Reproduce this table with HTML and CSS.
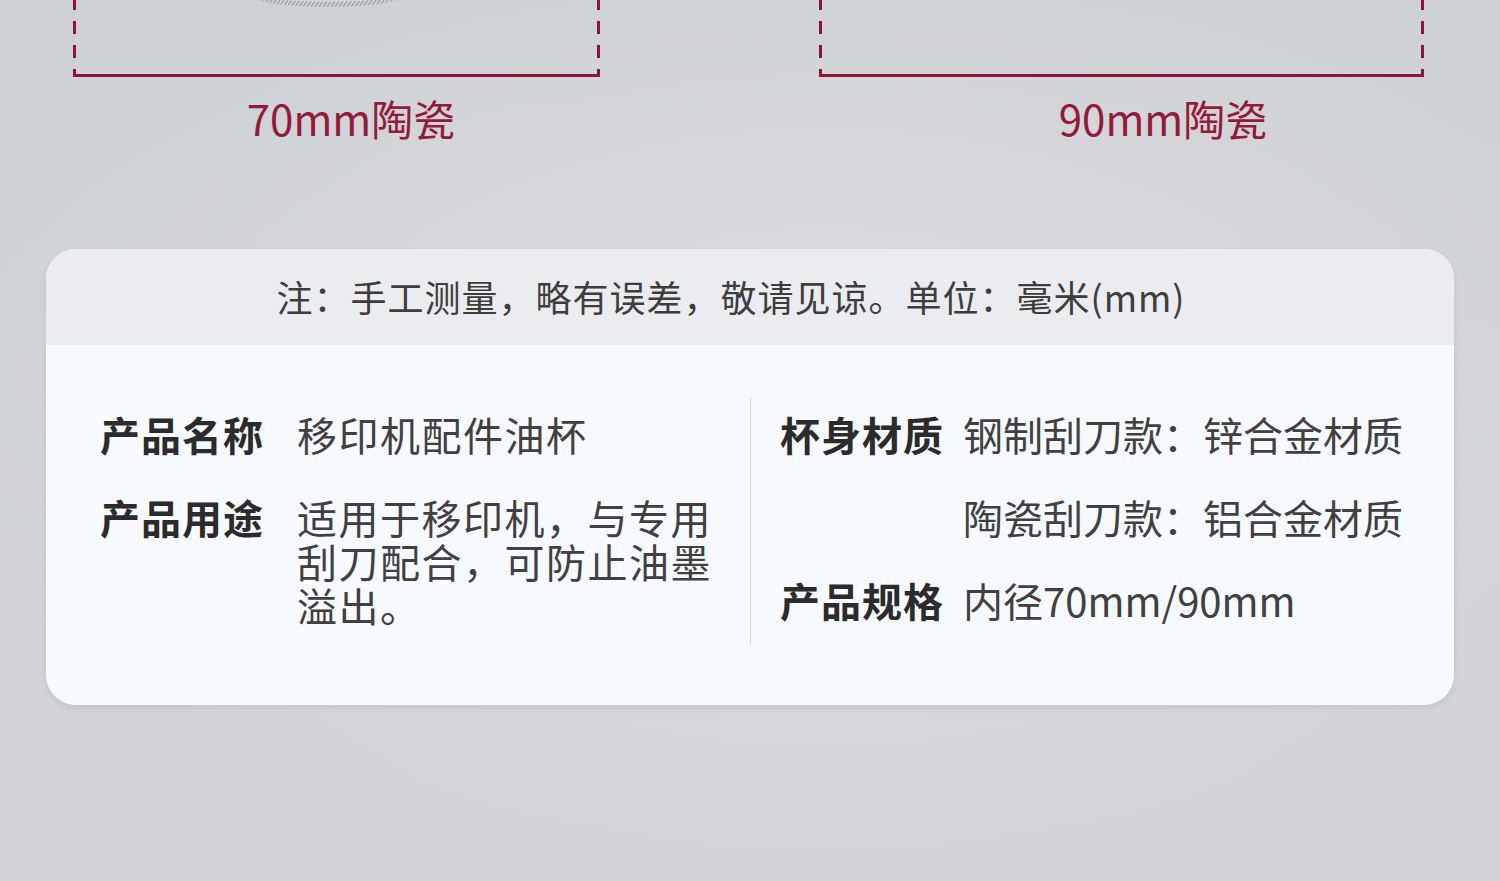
FILE: index.html
```html
<!DOCTYPE html>
<html lang="zh-CN">
<head>
    <meta charset="UTF-8">
    <meta name="viewport" content="width=device-width, initial-scale=1.0">
    <title>移印机配件油杯 - 规格参数</title>
    <link rel="stylesheet" href="styles.css">
</head>
<body>
    <!-- Size frames -->
    <div class="sizes">
        <div class="size-col size-70">
            <div class="frame">
                <svg class="ring" width="170" height="12" viewBox="0 0 170 12">
                    <defs>
                        <pattern id="knurl" width="4" height="12" patternUnits="userSpaceOnUse" patternTransform="skewX(-35)">
                            <rect width="4" height="12" fill="#d4d5d7"/>
                            <rect width="2" height="12" fill="#a6a7aa"/>
                        </pattern>
                    </defs>
                    <ellipse cx="85" cy="-5" rx="76" ry="12" fill="url(#knurl)"/>
                    <ellipse cx="85" cy="-8" rx="72" ry="10" fill="#cfd1d5"/>
                </svg>
            </div>
            <p class="size-label">70mm陶瓷</p>
        </div>
        <div class="size-col size-90">
            <div class="frame"></div>
            <p class="size-label">90mm陶瓷</p>
        </div>
    </div>

    <!-- Spec card -->
    <div class="spec-card">
        <div class="spec-note">注：手工测量，略有误差，敬请见谅。单位：毫米(mm)</div>
        <div class="spec-body">
            <div class="spec-col spec-left">
                <div class="spec-row">
                    <span class="spec-key">产品名称</span>
                    <span class="spec-val">移印机配件油杯</span>
                </div>
                <div class="spec-row">
                    <span class="spec-key">产品用途</span>
                    <span class="spec-val">适用于移印机，与专用刮刀配合，可防止油墨溢出。</span>
                </div>
            </div>
            <div class="spec-col spec-right">
                <div class="spec-row">
                    <span class="spec-key">杯身材质</span>
                    <span class="spec-val">钢制刮刀款：锌合金材质</span>
                </div>
                <div class="spec-row">
                    <span class="spec-key"></span>
                    <span class="spec-val">陶瓷刮刀款：铝合金材质</span>
                </div>
                <div class="spec-row">
                    <span class="spec-key">产品规格</span>
                    <span class="spec-val">内径70mm/90mm</span>
                </div>
            </div>
        </div>
    </div>
</body>
</html>
```

FILE: styles.css
```css
/* Page */
body {
    margin: 0;
    height: 881px;
    overflow: hidden;
    font-family: "Noto Sans CJK SC", "Noto Sans", sans-serif;
    background:
        radial-gradient(ellipse 60% 55% at 55% 45%, #dcdde1 0%, rgba(220,221,225,0) 100%),
        linear-gradient(to bottom, #cdd0d4, #d2d4d8);
}

/* Size frames */
.sizes {
    display: flex;
}

.size-col {
    display: flex;
    flex-direction: column;
}

.size-70 {
    margin-left: 73px;
    width: 527px;
}

.size-90 {
    margin-left: 219px;
    width: 605px;
}

.frame {
    position: relative;
    height: 74px;
    border-bottom: 3px solid #8e1537;
    background:
        repeating-linear-gradient(to top, #8e1537 -8px, #8e1537 5px, transparent 5px, transparent 16px) left bottom / 3px 100% no-repeat,
        repeating-linear-gradient(to top, #8e1537 -8px, #8e1537 5px, transparent 5px, transparent 16px) right bottom / 3px 100% no-repeat;
}

.ring {
    position: absolute;
    left: 170px;
    top: 0;
}

.size-label {
    margin: 16px 0 0;
    font-size: 42px;
    line-height: 50px;
    color: #931a3a;
    text-align: center;
}

.size-70 .size-label {
    padding-left: 29px;
}

.size-90 .size-label {
    padding-left: 83px;
}

/* Spec card */
.spec-card {
    margin: 106px 46px 0;
    border-radius: 30px;
    overflow: hidden;
    background: #f6f9fd;
    box-shadow: 0 3px 6px rgba(0,0,0,0.08);
}

.spec-note {
    height: 96px;
    line-height: 94px;
    background: #ebecef;
    color: #3d3d3d;
    font-size: 36px;
    letter-spacing: 1px;
    text-align: center;
    padding-right: 38px;
}

.spec-body {
    display: flex;
    padding: 52px 0 61px 54px;
}

.spec-col {
    display: flex;
    flex-direction: column;
    gap: 39px;
    padding: 15px 0 17px;
}

.spec-left {
    width: 650px;
}

.spec-right {
    border-left: 1px solid #d0d2d6;
    padding-left: 29px;
}

.spec-row {
    display: flex;
    font-size: 40px;
    line-height: 44px;
}

.spec-key {
    flex: none;
    font-weight: bold;
    color: #2b2b2b;
    letter-spacing: 1px;
}

.spec-val {
    color: #404040;
}

.spec-left .spec-key {
    width: 197px;
}

.spec-left .spec-val {
    width: 430px;
    letter-spacing: 1.5px;
}

.spec-right .spec-key {
    width: 183px;
}
```
